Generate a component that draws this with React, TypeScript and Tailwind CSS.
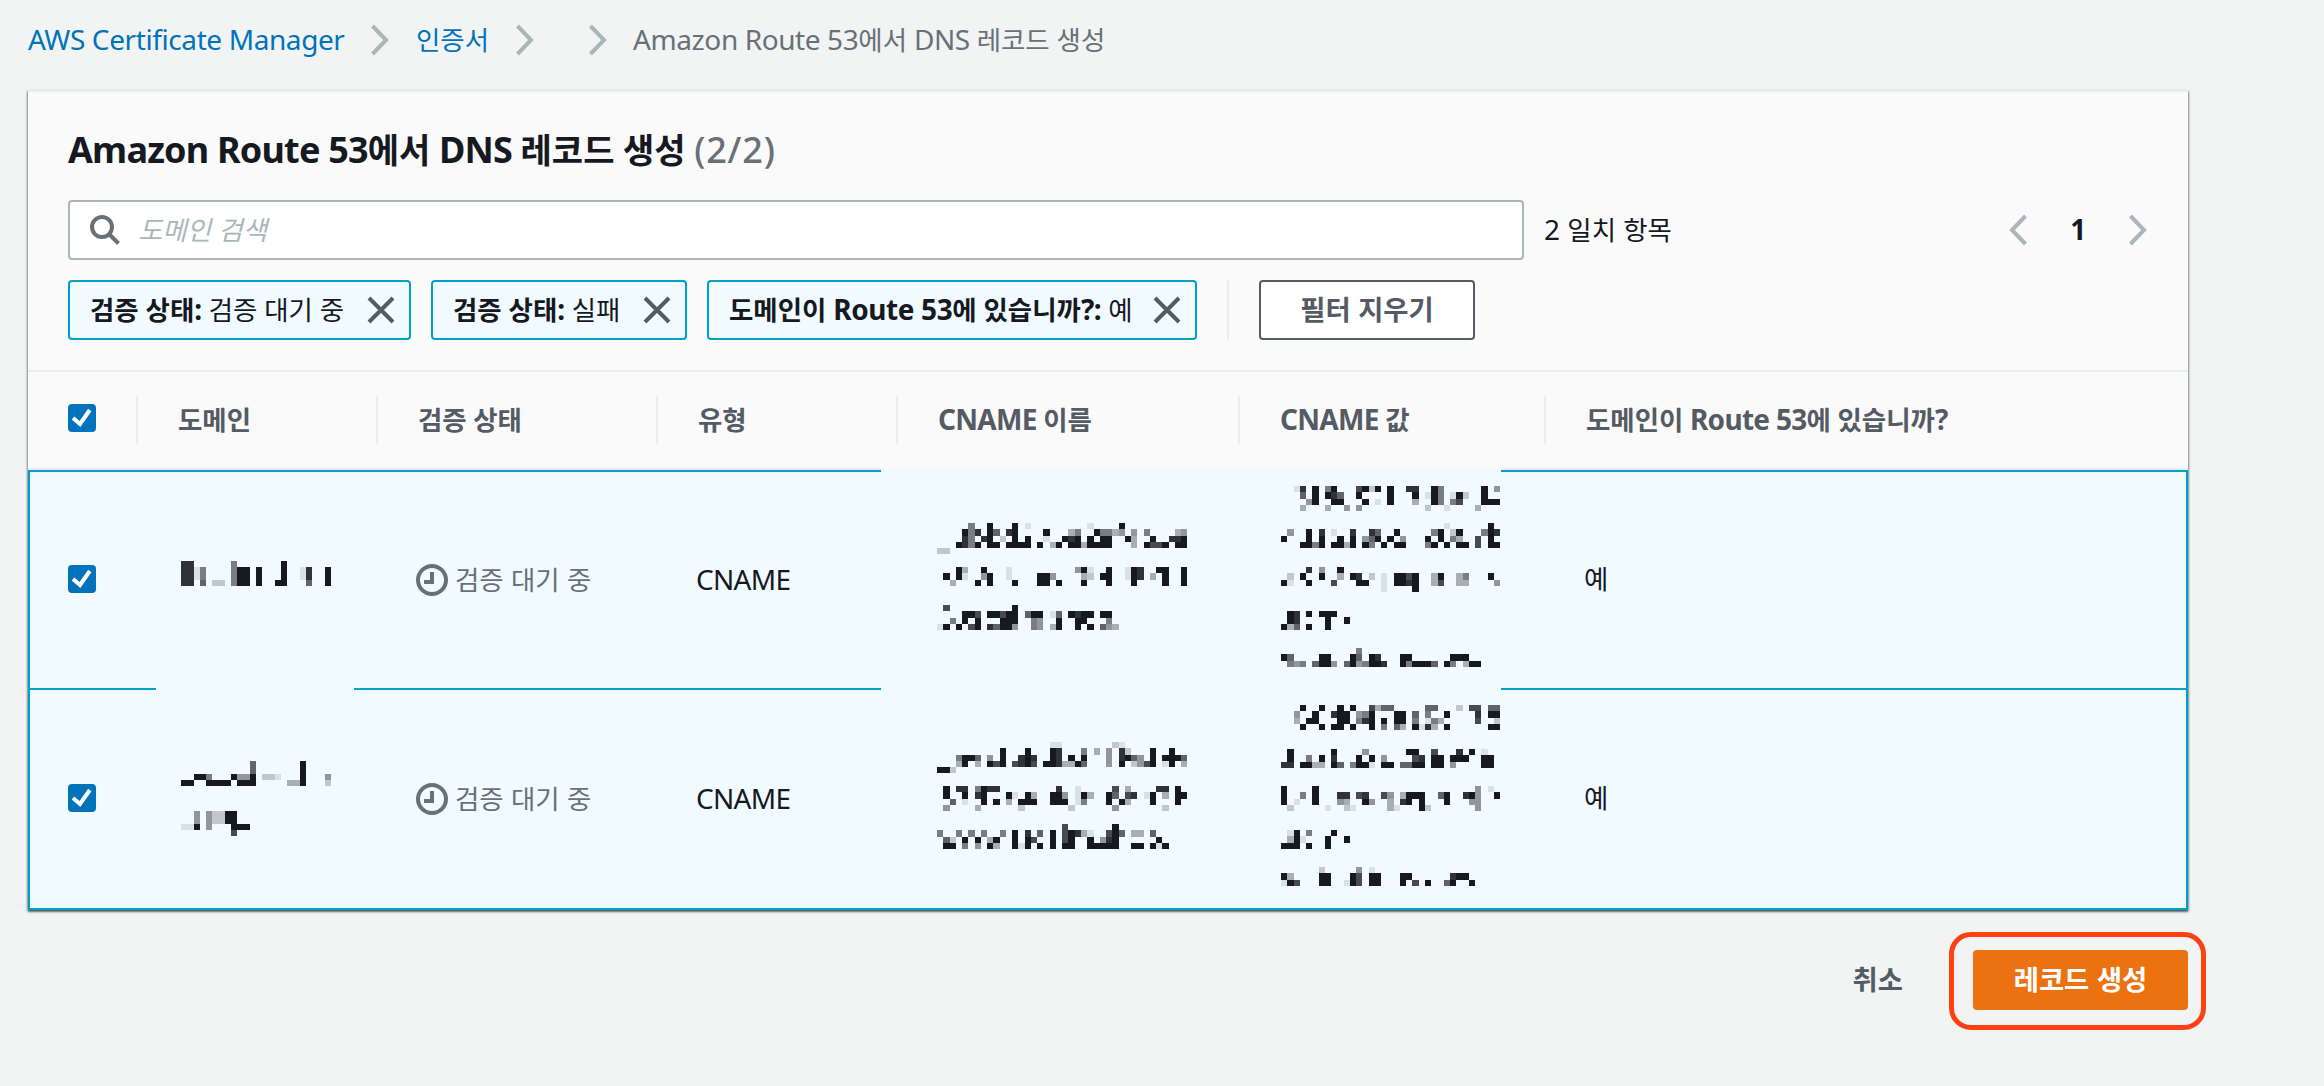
import { Fragment, type ReactNode } from "react"

type Line = { x: number; y: number; rows: string[] }

const CELL = 6.26

// Pixelated values, one digit per block (1 = faint, 9 = solid)
const domainLines: Line[] = [
  { x: 181, y: 561, rows: ["88......5.......9", "8815....599.9...9..18..9", "8815....599.9...9..18..9", "88.6.22.599.9..99...6..9"] },
  { x: 181, y: 761, rows: ["...........6.......9", "...........6.......9", "..995...9449.221...9...4", "99..9999.999.....339...2"] },
  { x: 181, y: 811, rows: ["..4.42299", "..4.42299", "119.4...999", "........7"] },
]

const cnameLines: Line[] = [
  {
    x: 937,
    y: 523,
    rows: [
      ".....5..9...9.1.........1....9",
      "....958.96.89....9...35..95534.4.5....34",
      "....85.89.2.9.9..1..989.9.99..93..9..889",
      "...9859.99.9999.9.39.9939999...3.9779.99",
      "22",
    ],
  },
  {
    x: 937,
    y: 567,
    rows: [
      "...93..9...1..........491..9..198..99..9",
      ".9.91..49..1....994....32.99..198.3.9..9",
      "..3...9.9...9...99.9...9...9...9....9..9",
    ],
  },
  {
    x: 937,
    y: 605,
    rows: [
      ".7..........9",
      "....997.99799.699.16.9899.99",
      "..5.9.9...999..54..9..99...5",
      "19.9.79.86994..54.39..9.9.643",
    ],
  },
  {
    x: 1281,
    y: 486,
    rows: [
      "..18.9.59...7929.9..88..95......9.4",
      "...6.9.986..9....9...9.195.192..9",
      "....49..99...9.1.9...3..95.57...999",
      "...3...3..4.4..........2..1....3",
    ],
  },
  {
    x: 1281,
    y: 523,
    rows: [
      "..........................1......9",
      ".4..9.8.1..8..86..9.....59.29...598",
      "9...9.9..9.9.469.9.4...9.9.53..7.9",
      "...9959.9939.95.9.99...59.9.99.7.99",
    ],
  },
  {
    x: 1281,
    y: 567,
    rows: [
      "....8.4..9",
      ".2.9..9..3.98.2.1.9979..39..35...9",
      "91..9...7...99..1.9989..37..33....4",
      "................1....9",
    ],
  },
  { x: 1281, y: 611, rows: [".98.9.999", ".98....9..9", "936.9..9"] },
  {
    x: 1281,
    y: 648,
    rows: ["............5", "96....99...96.98...99......999", ".545.6994.6945998..959996.95.399"],
  },
  {
    x: 937,
    y: 742,
    rows: [
      "..................11........21",
      "..........9...9...98...5.3.4.82...9..9",
      "...5996.4.9..898..98.9.9...4.8964.9.9996",
      "...39.3.979.7897.9983396...4.9.2479.19.3",
      "992",
    ],
  },
  {
    x: 937,
    y: 786,
    rows: [
      ".9.88.5988.........8..1.....7.3....88.9",
      ".9..9.89...91.93..994.193..96.78.19.3.99",
      "..6.1..9.9.3.999..999.15...9.93...9...9",
      ".4....3......2.......2......4.......2",
    ],
  },
  {
    x: 937,
    y: 824,
    rows: [
      "....................7.......9",
      "5..5.5.5..5.9.8.6.9.79831..796.33.6",
      ".62.9.9.39..9.97..9.79..9.489......9",
      ".99.5.4.93..919.9.9.99..99999..99.919",
    ],
  },
  {
    x: 1281,
    y: 705,
    rows: [
      "...9..9..9.9..7366.....66...2.77.66",
      "..4..9..899.459...99.6.5..9....8.99",
      "..3.99...99.589.9.99.5.153.....7..2",
      "...9..9.99.9..9.5.63.9183.9......99",
    ],
  },
  {
    x: 1281,
    y: 749,
    rows: [
      ".9......9....4......99..7...8.9.1",
      ".9..5.9.8...9.9.4....78.99.999..99",
      "88.9933.96.5991.99.6699.99.4....99",
    ],
  },
  {
    x: 1281,
    y: 786,
    rows: [
      "9....9.........................4.1",
      "9..5.9...88.78..74.3999..69..894..9",
      "9.1..9...43..94..3.89.9...9...44",
      ".2.....1..21.....31...92.......4",
    ],
  },
  { x: 1281, y: 830, rows: [".19.5...9", ".391...9..9", "999.9..9"] },
  {
    x: 1281,
    y: 867,
    rows: ["......2.....4.1", "93....99...97.99...99......899", "197...99..197.99...9.7.9..69..9"],
  },
]

function Mosaic({ lines, viewBox }: { lines: Line[]; viewBox: string }) {
  return (
    <svg className="block h-full w-full" viewBox={viewBox} shapeRendering="crispEdges" fill="#16191f">
      {lines.map((line, l) =>
        line.rows.map((row, r) =>
          row.split("").map((level, c) => {
            if (level === ".") return null
            const x = Math.round(c * CELL)
            const y = Math.round(r * CELL)
            return (
              <rect
                key={`${l}-${r}-${c}`}
                x={line.x + x}
                y={line.y + y}
                width={Math.round((c + 1) * CELL) - x}
                height={Math.round((r + 1) * CELL) - y}
                opacity={Number(level) / 9}
              />
            )
          })
        )
      )}
    </svg>
  )
}

// Hangul runs are set a little smaller than the Latin text around them
function Txt({ children }: { children: string }) {
  return (
    <>
      {children.split(/([가-힣]+)/).map((part, i) =>
        /[가-힣]/.test(part) ? (
          <span key={i} className="text-[0.945em] tracking-normal">
            {part}
          </span>
        ) : (
          <Fragment key={i}>{part}</Fragment>
        )
      )}
    </>
  )
}

function Chevron({ left = false }: { left?: boolean }) {
  return (
    <svg className="h-8 w-5 shrink-0" viewBox="0 0 20 32" fill="none" stroke="#aab7b8" strokeWidth="4">
      <path d={left ? "M17.5 2 4 16l13.5 14" : "M2.5 2 16 16 2.5 30"} />
    </svg>
  )
}

function Checkbox() {
  return (
    <span className="flex h-7 w-7 items-center justify-center rounded bg-[#0073bb]">
      <svg className="h-7 w-7" viewBox="0 0 28 28" fill="none" stroke="#fff" strokeWidth="4">
        <path d="m5 14 7 6L21.8 6" />
      </svg>
    </span>
  )
}

function Token({ label, value, width }: { label: string; value: string; width: string }) {
  return (
    <div
      className={`${width} flex h-[60px] shrink-0 items-center justify-between rounded border-2 border-[#00a1c9] bg-[#f1fafe] pl-5 pr-[14px] whitespace-nowrap`}
    >
      <span className="pb-0.5">
        <b>
          <Txt>{label}</Txt>
        </b>{" "}
        <Txt>{value}</Txt>
      </span>
      <svg className="h-7 w-7" viewBox="0 0 28 28" stroke="#545b64" strokeWidth="4">
        <path d="m2 2 24 24M26 2 2 26" />
      </svg>
    </div>
  )
}

const columns = [
  { title: "도메인", width: "w-[240px]" },
  { title: "검증 상태", width: "w-[280px]" },
  { title: "유형", width: "w-[240px]" },
  { title: "CNAME 이름", width: "w-[342px]" },
  { title: "CNAME 값", width: "w-[306px]" },
  { title: "도메인이 Route 53에 있습니까?", width: "flex-1" },
]

function Cell({ width, children }: { width: string; children?: ReactNode }) {
  return <div className={`${width} flex shrink-0 items-center pb-0.5 pl-10`}>{children}</div>
}

function Row({ height }: { height: string }) {
  return (
    <div className={`${height} flex border-x-2 border-b-2 border-[#00a1c9] bg-[#f1fafe]`}>
      <div className="flex w-[106px] shrink-0 items-center pb-[3px] pl-[38px]">
        <Checkbox />
      </div>
      <Cell width="w-[240px]" />
      <Cell width="w-[280px]">
        <div className="flex items-center gap-[7px] tracking-normal text-[#687078]">
          <svg className="mt-0.5 h-8 w-8" viewBox="0 0 32 32" fill="none" stroke="#687078" strokeWidth="4">
            <circle cx="16" cy="16" r="14" />
            <path d="M16 8v10H8" />
          </svg>
          <span>
            <Txt>검증 대기 중</Txt>
          </span>
        </div>
      </Cell>
      <Cell width="w-[240px]">
        <span className="tracking-[-0.7px]">CNAME</span>
      </Cell>
      <Cell width="w-[342px]" />
      <Cell width="w-[306px]" />
      <Cell width="flex-1">
        <Txt>예</Txt>
      </Cell>
    </div>
  )
}

export default function App() {
  return (
    <div className="min-h-[1086px] w-[2324px] bg-[#f2f3f3] pl-7 font-['Noto_Sans','Noto_Sans_CJK_KR',sans-serif] text-[28px] leading-[44px] tracking-[-0.4px] text-[#16191f]">
      <nav className="flex h-[90px] items-start pt-[18px]">
        <div className="flex h-11 items-center whitespace-nowrap text-[#687078]">
          <a className="w-[342px] pb-0.5 text-[#0073bb]">AWS Certificate Manager</a>
          <Chevron />
          <a className="ml-[26px] w-[99px] pb-0.5 text-[#0073bb]">
            <Txt>인증서</Txt>
          </a>
          <Chevron />
          <span className="w-[53px]" />
          <Chevron />
          <span className="ml-[25px] pb-0.5">
            <Txt>Amazon Route 53에서 DNS 레코드 생성</Txt>
          </span>
        </div>
      </nav>

      <main className="w-[2160px] border-t-2 border-[#eaeded] bg-[#fafafa] shadow-[0_2px_2px_0_rgba(0,28,36,0.5),1px_1px_2px_0_rgba(0,28,36,0.3),-1px_1px_2px_0_rgba(0,28,36,0.3)]">
        <div className="h-[280px] border-b-2 border-[#eaeded] px-10 pt-[34px]">
          <h1 className="h-[74px] text-[36px] leading-[48px] font-bold tracking-[-0.8px] whitespace-nowrap">
            <Txt>Amazon Route 53에서 DNS 레코드 생성</Txt>{" "}
            <span className="font-medium tracking-[0.8px] text-[#687078]">(2/2)</span>
          </h1>

          <div className="flex h-[60px] items-center">
            <div className="flex h-[60px] w-[1456px] items-center rounded border-2 border-[#aab7b8] bg-white pl-5">
              <svg className="h-[30px] w-[30px]" viewBox="0 0 30 30" fill="none" stroke="#687078" strokeWidth="4">
                <circle cx="12" cy="12" r="10" />
                <path d="m19 19 9.5 9.5" />
              </svg>
              <span className="ml-[18px] pb-0.5 tracking-normal text-[#aab7b8] italic">
                <Txt>도메인 검색</Txt>
              </span>
            </div>
            <span className="ml-5 pb-0.5 tracking-normal">
              <Txt>2 일치 항목</Txt>
            </span>
            <div className="ml-auto flex items-center">
              <Chevron left />
              <b className="w-[100px] pb-0.5 text-center">1</b>
              <Chevron />
            </div>
          </div>

          <div className="mt-5 flex gap-5">
            <Token label="검증 상태:" value="검증 대기 중" width="w-[343px]" />
            <Token label="검증 상태:" value="실패" width="w-[256px]" />
            <Token label="도메인이 Route 53에 있습니까?:" value="예" width="w-[490px]" />
            <div className="ml-[10px] h-[60px] w-0.5 bg-[#eaeded]" />
            <button className="ml-[10px] h-[60px] w-[216px] rounded border-2 border-[#545b64] bg-white pb-0.5 text-[29px] font-bold tracking-normal text-[#545b64]">
              <Txt>필터 지우기</Txt>
            </button>
          </div>
        </div>

        <div className="flex h-[98px] items-center border-b-2 border-[#eaeded] font-bold tracking-[-0.7px] text-[#545b64]">
          <div className="flex h-12 w-[108px] shrink-0 items-center pb-1 pl-10">
            <Checkbox />
          </div>
          {columns.map((column) => (
            <div key={column.title} className={`${column.width} flex h-12 shrink-0 items-center border-l-2 border-[#eaeded] pb-0.5 pl-10`}>
              <span>
                <Txt>{column.title}</Txt>
              </span>
            </div>
          ))}
        </div>

        <div className="relative">
          <div className="h-0.5 bg-[#00a1c9]" />
          <Row height="h-[218px]" />
          <Row height="h-[220px]" />
          <div className="absolute top-[70px] left-[128px] h-[320px] w-[198px] bg-[#f1faff]">
            <Mosaic lines={domainLines} viewBox="156 540 198 320" />
          </div>
          <div className="absolute -top-0.5 left-[853px] h-[436px] w-[620px] bg-[#f1faff]">
            <Mosaic lines={cnameLines} viewBox="881 468 620 436" />
          </div>
        </div>
      </main>

      <footer className="flex h-[176px] w-[2160px] items-start justify-end pt-10 text-[29px] font-bold tracking-normal">
        <button className="mr-[70px] h-[60px] pb-0.5 text-[#545b64]">
          <Txt>취소</Txt>
        </button>
        <button className="relative h-[60px] w-[215px] rounded bg-[#ec7211] pb-0.5 text-white">
          <Txt>레코드 생성</Txt>
          <span className="absolute -top-[18px] -left-6 h-[98px] w-[257px] rounded-[22px] border-5 border-[#ff4013]" />
        </button>
      </footer>
    </div>
  )
}
